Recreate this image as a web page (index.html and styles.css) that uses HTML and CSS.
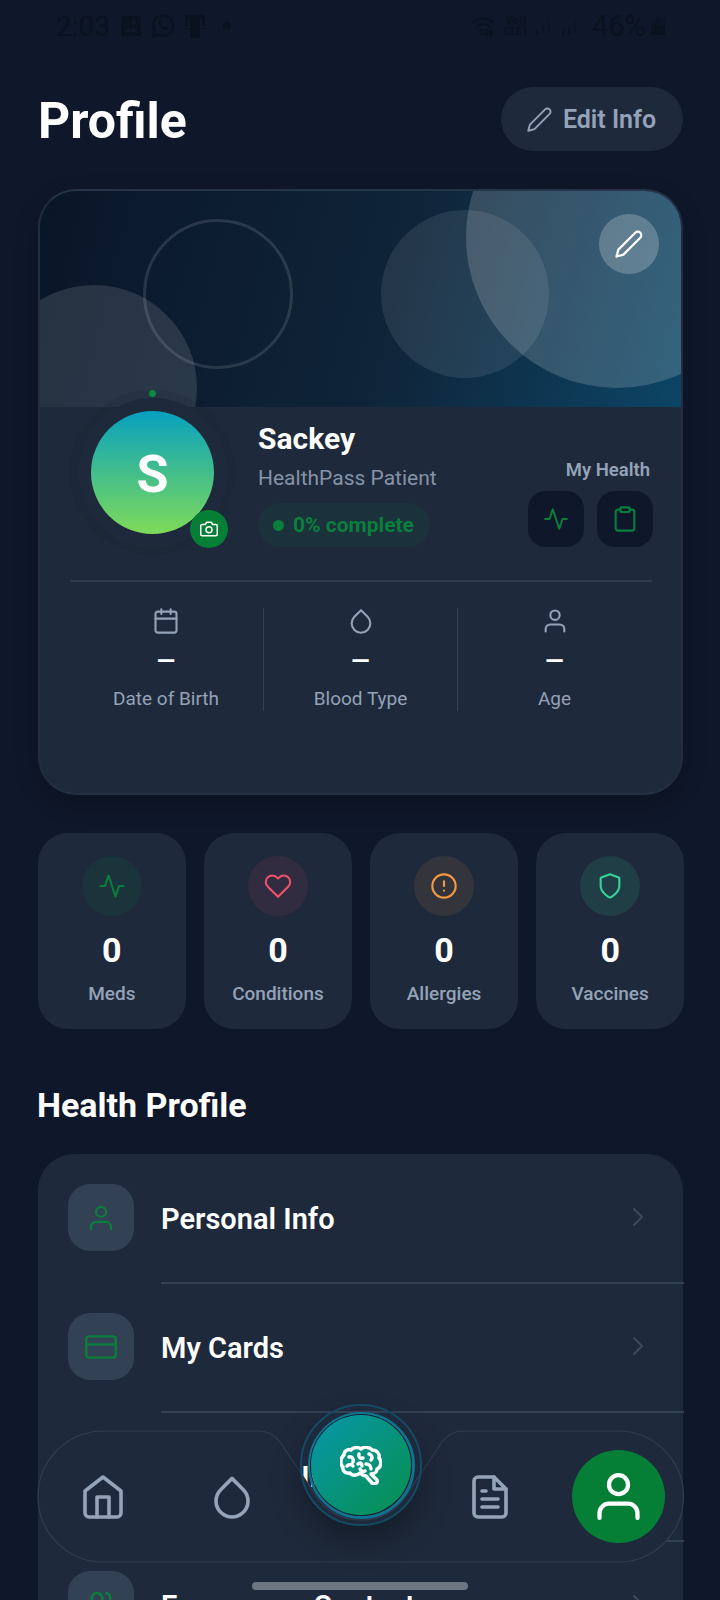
FILE: index.html
```html
<!DOCTYPE html>
<html lang="en">
<head>
<meta charset="utf-8">
<title>Profile</title>
<link rel="stylesheet" href="styles.css">
</head>
<body>
<div class="page">
  <div class="status">
    <div class="status-left">
      <span class="clock">2:03</span>
      <svg class="st-img" viewBox="0 0 20 20"><path d="M3 0h14a3 3 0 0 1 3 3v14a3 3 0 0 1-3 3H3a3 3 0 0 1-3-3V3a3 3 0 0 1 3-3zm10 4a2.300 2.300 0 1 0 0 4.600A2.300 2.300 0 0 0 13 4zM2.500 16.500h15l-4.500-6-3 3.500-2.500-2.500z" fill-rule="evenodd"/></svg>
      <svg class="st-wa" viewBox="0 0 24 24"><path class="st-line" d="M2 22l1.500-5.300A10 10 0 1 1 7.500 20.500z"/><path d="M8.500 6.800c-1.500 1-1.500 3 .3 5.500 2 2.800 4.500 4.200 6.500 3.800 1.300-.3 2-1.400 1.800-2.300l-2.700-1.300-1.200 1.300c-1.300-.5-2.800-2-3.400-3.400l1.100-1.200-1.200-2.800z"/></svg>
      <svg class="st-dev" viewBox="0 0 24 24"><path d="M2 1h20v11h-3V4H5v8H2zM7 4h10v20H7z"/><path d="M0 14h6v1H0zM18 14h6v1h-6z"/></svg>
      <span class="st-dot"></span>
    </div>
    <div class="status-right">
      <svg class="st-wifi" viewBox="0 0 25 21"><path class="st-line" d="M1 7a16 16 0 0 1 22 0M5 11a10.500 10.500 0 0 1 14 0M9 15a5 5 0 0 1 5-1"/><circle cx="11" cy="18" r="1.500"/><path d="M15 12h1.600v5h2l-2.800 4-2.800-4h2zM20 13l2.500 3.500h-1.600V21h-1.800v-4.500h-1.600z"/></svg>
      <div class="st-net"><span>Vo))</span><span>LTE1</span></div>
      <svg class="st-bars" viewBox="0 0 19 20"><path d="M1 14h2v5H1z"/><path class="st-faint" d="M7 9h2v10H7zM13 4h2v15h-2z"/></svg>
      <svg class="st-bars" viewBox="0 0 19 20"><path d="M1 14h2v5H1zM7 11h2v8H7z"/><path class="st-faint" d="M13 4h2v15h-2z"/></svg>
      <span class="st-pct">46%</span>
      <svg class="st-batt" viewBox="0 0 14 18"><path class="st-faint" d="M4 0h6v2h3a1 1 0 0 1 1 1v5H0V3a1 1 0 0 1 1-1h3z"/><path d="M0 8h14v9a1 1 0 0 1-1 1H1a1 1 0 0 1-1-1z"/></svg>
    </div>
  </div>

  <header class="head">
    <h1 class="title">Profile</h1>
    <button class="edit-info">
      <svg class="ic ic-27 slate" viewBox="0 0 24 24"><path d="M17 3a2.828 2.828 0 1 1 4 4L7.500 20.500 2 22l1.500-5.500L17 3z"/></svg>
      <span>Edit Info</span>
    </button>
  </header>

  <section class="card">
    <div class="banner">
      <span class="bub bub-a"></span>
      <span class="bub bub-b"></span>
      <span class="bub bub-c"></span>
      <span class="bub bub-d"></span>
      <button class="banner-edit">
        <svg class="ic ic-30 white" viewBox="0 0 24 24"><path d="M17 3a2.828 2.828 0 1 1 4 4L7.500 20.500 2 22l1.500-5.500L17 3z"/></svg>
      </button>
    </div>
    <div class="who">
      <div class="ring-outer">
        <div class="ring-inner">
          <div class="avatar">S</div>
        </div>
        <span class="ring-dot"></span>
        <span class="cam">
          <svg class="ic ic-18 white" viewBox="0 0 24 24"><path d="M23 19a2 2 0 0 1-2 2H3a2 2 0 0 1-2-2V8a2 2 0 0 1 2-2h4l2-3h6l2 3h4a2 2 0 0 1 2 2z"/><circle cx="12" cy="13" r="4"/></svg>
        </span>
      </div>
      <div class="who-text">
        <div class="name">Sackey</div>
        <div class="role">HealthPass Patient</div>
        <div class="pill"><span class="pill-dot"></span><span>0% complete</span></div>
      </div>
      <div class="my-health">
        <div class="mh-label">My Health</div>
        <div class="mh-btns">
          <span class="mh-btn"><svg class="ic ic-26 green" viewBox="0 0 24 24"><polyline points="22 12 18 12 15 21 9 3 6 12 2 12"/></svg></span>
          <span class="mh-btn"><svg class="ic ic-28 green" viewBox="0 0 24 24"><path d="M16 4h2a2 2 0 0 1 2 2v14a2 2 0 0 1-2 2H6a2 2 0 0 1-2-2V6a2 2 0 0 1 2-2h2"/><rect x="8" y="2" width="8" height="4" rx="1"/></svg></span>
        </div>
      </div>
    </div>
    <div class="card-rule"></div>
    <div class="facts">
      <div class="fact">
        <svg class="ic ic-28 slate" viewBox="0 0 24 24"><rect x="3" y="4" width="18" height="18" rx="2"/><path d="M16 2v4M8 2v4M3 10h18"/></svg>
        <div class="fact-val">—</div>
        <div class="fact-label">Date of Birth</div>
      </div>
      <div class="fact">
        <svg class="ic ic-28 slate" viewBox="0 0 24 24"><path d="M12 2.690l5.660 5.660a8 8 0 1 1-11.310 0z"/></svg>
        <div class="fact-val">—</div>
        <div class="fact-label">Blood Type</div>
      </div>
      <div class="fact">
        <svg class="ic ic-28 slate" viewBox="0 0 24 24"><path d="M20 21v-2a4 4 0 0 0-4-4H8a4 4 0 0 0-4 4v2"/><circle cx="12" cy="7" r="4"/></svg>
        <div class="fact-val">—</div>
        <div class="fact-label">Age</div>
      </div>
    </div>
  </section>

  <section class="tiles">
    <div class="tile">
      <span class="tile-ic tint-green"><svg class="ic ic-28 green" viewBox="0 0 24 24"><polyline points="22 12 18 12 15 21 9 3 6 12 2 12"/></svg></span>
      <div class="tile-val">0</div>
      <div class="tile-label">Meds</div>
    </div>
    <div class="tile">
      <span class="tile-ic tint-red"><svg class="ic ic-28 red" viewBox="0 0 24 24"><path d="M20.840 4.610a5.500 5.500 0 0 0-7.780 0L12 5.670l-1.060-1.060a5.500 5.500 0 0 0-7.780 7.780l1.060 1.060L12 21.230l7.780-7.780 1.060-1.060a5.500 5.500 0 0 0 0-7.780z"/></svg></span>
      <div class="tile-val">0</div>
      <div class="tile-label">Conditions</div>
    </div>
    <div class="tile">
      <span class="tile-ic tint-orange"><svg class="ic ic-28 orange" viewBox="0 0 24 24"><circle cx="12" cy="12" r="10"/><path d="M12 8v4M12 16h.01"/></svg></span>
      <div class="tile-val">0</div>
      <div class="tile-label">Allergies</div>
    </div>
    <div class="tile">
      <span class="tile-ic tint-mint"><svg class="ic ic-28 mint" viewBox="0 0 24 24"><path d="M12 22s8-4 8-10V5l-8-3-8 3v7c0 6 8 10 8 10z"/></svg></span>
      <div class="tile-val">0</div>
      <div class="tile-label">Vaccines</div>
    </div>
  </section>

  <h2 class="section-title">Health Profile</h2>

  <section class="list">
    <div class="row">
      <span class="row-ic"><svg class="ic ic-30 green" viewBox="0 0 24 24"><path d="M20 21v-2a4 4 0 0 0-4-4H8a4 4 0 0 0-4 4v2"/><circle cx="12" cy="7" r="4"/></svg></span>
      <div class="row-body"><span>Personal Info</span><svg class="chev" viewBox="0 0 12 20"><path d="M2 2l8 8-8 8"/></svg></div>
    </div>
    <div class="row">
      <span class="row-ic"><svg class="ic ic-32 green" viewBox="0 0 24 24"><rect x="1" y="4" width="22" height="16" rx="2"/><path d="M1 10h22"/></svg></span>
      <div class="row-body"><span>My Cards</span><svg class="chev" viewBox="0 0 12 20"><path d="M2 2l8 8-8 8"/></svg></div>
    </div>
    <div class="row">
      <span class="row-ic"><svg class="ic ic-32 green" viewBox="0 0 24 24"><path d="M12 22s8-4 8-10V5l-8-3-8 3v7c0 6 8 10 8 10z"/></svg></span>
      <div class="row-body"><span class="row-wide">Insurance Info</span><svg class="chev" viewBox="0 0 12 20"><path d="M2 2l8 8-8 8"/></svg></div>
    </div>
    <div class="row">
      <span class="row-ic"><svg class="ic ic-32 green" viewBox="0 0 24 24"><path d="M17 21v-2a4 4 0 0 0-4-4H5a4 4 0 0 0-4 4v2"/><circle cx="9" cy="7" r="4"/><path d="M23 21v-2a4 4 0 0 0-3-3.870M16 3.130a4 4 0 0 1 0 7.750"/></svg></span>
      <div class="row-body"><span>Emergency Contact</span><svg class="chev" viewBox="0 0 12 20"><path d="M2 2l8 8-8 8"/></svg></div>
    </div>
  </section>

  <nav class="nav">
    <svg class="nav-bg" viewBox="37 1430 647 134"><path d="M103.500 1431H258C270 1431 278 1437 284 1448L317 1497C326 1512 344 1520 361 1520S396 1512 405 1497L438 1448C444 1437 452 1431 464 1431H618A65.500 65.500 0 0 1 618 1562H103.500A65.500 65.500 0 0 1 103.500 1431Z"/></svg>
    <span class="nav-item"><svg class="ic ic-48 slate" viewBox="0 0 24 24"><path d="M3 9l9-7 9 7v11a2 2 0 0 1-2 2H5a2 2 0 0 1-2-2z"/><path d="M9 22V12h6v10"/></svg></span>
    <span class="nav-item"><svg class="ic ic-48 slate" viewBox="0 0 24 24"><path d="M12 2.690l5.660 5.660a8 8 0 1 1-11.310 0z"/></svg></span>
    <span class="nav-item"></span>
    <span class="nav-item"><svg class="ic ic-48 slate" viewBox="0 0 24 24"><path d="M14 2H6a2 2 0 0 0-2 2v16a2 2 0 0 0 2 2h12a2 2 0 0 0 2-2V8z"/><path d="M14 2v6h6M16 13H8M16 17H8M10 9H8"/></svg></span>
    <span class="nav-item"><span class="nav-active"><svg class="ic ic-57 white" viewBox="0 0 24 24"><path d="M20 21v-2a4 4 0 0 0-4-4H8a4 4 0 0 0-4 4v2"/><circle cx="12" cy="7" r="4"/></svg></span></span>
    <div class="fab-ring">
      <div class="fab-ring2">
        <div class="fab">
          <svg class="brain" viewBox="0 0 42 39"><path d="M4 9C4 4 9 3 11 4C13 1 19 1 21 3C24 0 30 1 32 4C37 4 40 8 39 12C42 15 41 22 37 23C37 26 34 28 31 28L37 34C38 37 35 39 32 37L26 30C24 30 22 29 20 27C17 30 12 30 10 27C6 28 2 25 3 21C0 19 0 12 4 9Z"/><path d="M9 11C12 10 14 13 13 16M7 20C9 18 12 18 13 20M19 8C18 11 20 13 23 12M29 8C32 9 33 12 31 14M18 18C20 16 22 17 22 20M26 18C29 18 31 20 31 23M20 23C21 25 23 26 25 25"/></svg>
        </div>
      </div>
    </div>
  </nav>
  <div class="home-bar"></div>
</div>
</body>
</html>
```

FILE: styles.css
```css
* { box-sizing: border-box; }
html, body { margin: 0; padding: 0; background: #0f172a; }
body { font-family: Roboto, "Liberation Sans", sans-serif; color: #fff; }
button { font-family: inherit; border: 0; cursor: pointer; }

.page { position: relative; width: 720px; height: 1600px; overflow: hidden; background: #0f172a; padding: 0 37px 0 38px; }

/* icons */
.ic { display: block; flex: none; fill: none; stroke: currentColor; stroke-width: 1.8; stroke-linecap: round; stroke-linejoin: round; }
.ic-18 { width: 18px; height: 18px; stroke-width: 2; }
.ic-26 { width: 26px; height: 26px; }
.ic-27 { width: 27px; height: 27px; stroke-width: 1.7; }
.ic-28 { width: 28px; height: 28px; }
.ic-30 { width: 30px; height: 30px; }
.ic-32 { width: 32px; height: 32px; }
.ic-48 { width: 48px; height: 48px; }
.ic-57 { width: 57px; height: 57px; }
.slate { color: #94a3b8; }
.white { color: #fff; }
.green { color: #0a7f3c; }
.red { color: #f0506a; }
.orange { color: #f59a42; }
.mint { color: #34d399; }

/* status bar */
.status { height: 52px; margin: 0 -37px 0 -38px; padding: 0 55px 0 56px; display: flex; justify-content: space-between; align-items: center; color: #0a111f; fill: #0a111f; }
.status-left, .status-right { display: flex; align-items: center; }
.clock { font-size: 28px; width: 65px; }
.st-img { width: 20px; height: 20px; margin-right: 10px; }
.st-wa { width: 24px; height: 24px; margin-right: 8px; }
.st-dev { width: 24px; height: 24px; }
.st-dot { width: 8px; height: 8px; border-radius: 50%; background: #0a111f; margin-left: 16px; }
.st-line { fill: none; stroke: #0a111f; stroke-width: 2; }
.st-wifi { width: 25px; height: 21px; margin-right: 8px; }
.st-net { display: flex; flex-direction: column; align-items: center; font-size: 11px; font-weight: 700; line-height: 11px; width: 24px; margin-right: 7px; }
.st-bars { width: 19px; height: 20px; margin-right: 7px; }
.st-faint { opacity: .45; }
.st-pct { font-size: 29px; width: 59px; margin-left: 5px; }
.st-batt { width: 14px; height: 18px; }

/* header */
.head { display: flex; justify-content: space-between; align-items: center; margin-top: 35px; height: 64px; }
.title { margin: 0; padding-top: 3px; font-size: 50px; font-weight: 700; line-height: 64px; }
.edit-info { height: 64px; width: 182px; border-radius: 32px; background: #1e293b; color: #94a3b8; font-size: 25px; font-weight: 600; display: flex; align-items: center; justify-content: center; gap: 10px; padding: 1px 2px 0 0; }

/* profile card */
.card { margin-top: 38px; height: 606px; background: #1e293b; border: 2px solid #273347; border-bottom-color: #253044; border-left-color: #222d40; border-right-color: #222d40; border-radius: 38px; overflow: hidden; box-shadow: 0 8px 24px rgba(0, 0, 0, .2); }
.banner { position: relative; height: 216px; overflow: hidden; background: linear-gradient(105deg, #0a1628 0%, #0f2439 55%, #0c4565 100%); }
.bub { position: absolute; border-radius: 50%; }
.bub-a { left: 426px; top: -105px; width: 302px; height: 302px; background: rgba(255, 255, 255, .17); }
.bub-b { left: 341px; top: 19px; width: 168px; height: 168px; background: rgba(255, 255, 255, .09); }
.bub-c { left: 103px; top: 28px; width: 150px; height: 150px; border: 3px solid rgba(255, 255, 255, .12); }
.bub-d { left: -49px; top: 94px; width: 206px; height: 206px; background: rgba(255, 255, 255, .12); }
.banner-edit { position: absolute; left: 559px; top: 23px; width: 60px; height: 60px; border-radius: 50%; background: rgba(255, 255, 255, .22); display: flex; align-items: center; justify-content: center; padding: 0; }

.who { position: relative; display: flex; margin-top: -17px; padding: 0 28px 0 30px; height: 165px; }
.ring-outer { position: relative; flex: none; width: 165px; height: 165px; border-radius: 50%; background: rgba(15, 23, 42, .12); display: flex; align-items: center; justify-content: center; }
.ring-inner { width: 150px; height: 150px; border-radius: 50%; background: #1e293b; display: flex; align-items: center; justify-content: center; }
.avatar { width: 123px; height: 123px; border-radius: 50%; padding-top: 3px; background: linear-gradient(180deg, #07a0bf, #7edb58); display: flex; align-items: center; justify-content: center; font-size: 52px; font-weight: 700; }
.ring-dot { position: absolute; left: 79px; top: 0; width: 7px; height: 7px; border-radius: 50%; background: #0a8a3e; }
.cam { position: absolute; left: 120px; top: 120px; width: 38px; height: 38px; border-radius: 50%; background: #057f36; display: flex; align-items: center; justify-content: center; }

.who-text { margin-left: 23px; padding-top: 31px; }
.name { font-size: 30px; font-weight: 700; line-height: 36px; }
.role { font-size: 21px; line-height: 26px; margin-top: 8px; color: #8493a8; }
.pill { margin-top: 12px; height: 44px; width: 172px; border-radius: 22px; background: rgba(10, 127, 60, .1); display: flex; align-items: center; gap: 9px; padding-left: 15px; color: #0a7f3c; font-size: 21px; font-weight: 700; }
.pill-dot { width: 11px; height: 11px; border-radius: 50%; background: #0a7f3c; }

.my-health { margin-left: auto; padding-top: 69px; display: flex; flex-direction: column; align-items: flex-end; }
.mh-label { font-size: 18.5px; font-weight: 600; line-height: 22px; color: #94a3b8; padding-right: 3px; }
.mh-btns { display: flex; gap: 13px; margin-top: 10px; }
.mh-btn { width: 56px; height: 56px; border-radius: 18px; background: #0f172a; display: flex; align-items: center; justify-content: center; }

.card-rule { height: 2px; background: #2d394c; margin: 25px 29px 0 30px; }
.facts { display: grid; grid-template-columns: repeat(3, 1fr); margin: 26px 30px 0 29px; }
.fact { height: 103px; display: flex; flex-direction: column; align-items: center; border-left: 1px solid #334155; }
.fact:first-child { border-left: 0; }
.fact .ic { margin-top: -1px; }
.fact-val { margin-top: 11px; font-size: 24px; font-weight: 700; line-height: 30px; }
.fact-label { margin-top: 11px; font-size: 19px; line-height: 24px; color: #94a3b8; }

/* tiles */
.tiles { margin: 38px -1px 0 0; display: grid; grid-template-columns: repeat(4, 1fr); gap: 18.5px; }
.tile { height: 196px; border-radius: 30px; background: #1e293b; padding-top: 23px; display: flex; flex-direction: column; align-items: center; }
.tile-ic { width: 60px; height: 60px; border-radius: 50%; display: flex; align-items: center; justify-content: center; }
.tint-green { background: rgba(10, 127, 60, .12); }
.tint-red { background: rgba(240, 80, 106, .1); }
.tint-orange { background: rgba(245, 154, 66, .1); }
.tint-mint { background: rgba(52, 211, 153, .12); }
.tile-val { margin-top: 14px; font-size: 34px; font-weight: 700; line-height: 40px; }
.tile-label { margin-top: 12px; font-size: 19px; font-weight: 500; line-height: 24px; color: #94a3b8; }

.section-title { margin: 56px 0 0 -1px; font-size: 34px; font-weight: 700; line-height: 40px; }

/* list */
.list { margin-top: 29px; background: #1e293b; border-radius: 36px; padding-top: 1px; }
.row { display: flex; align-items: center; height: 129px; padding-left: 30px; }
.row-ic { flex: none; width: 66px; height: 67px; margin-bottom: 4px; border-radius: 22px; background: #334155; display: flex; align-items: center; justify-content: center; }
.row-body { flex: 1; align-self: stretch; margin-left: 27px; margin-right: -1px; border-bottom: 2px solid #334155; display: flex; align-items: center; justify-content: space-between; padding-right: 40px; font-size: 29px; font-weight: 600; }
.row-wide { word-spacing: 5px; }
.chev { width: 12px; height: 20px; margin-bottom: 4px; fill: none; stroke: #3d4a5e; stroke-width: 2; stroke-linecap: round; stroke-linejoin: round; }

/* bottom nav */
.nav { position: absolute; left: 38px; top: 1431px; width: 645px; height: 131px; display: grid; grid-template-columns: repeat(5, 1fr); }
.nav-bg { position: absolute; left: -1px; top: -1px; width: 647px; height: 134px; fill: #1e293b; stroke: #313d50; stroke-width: 1.2; }
.nav-item { position: relative; display: flex; align-items: center; justify-content: center; }
.nav-active { width: 93px; height: 93px; border-radius: 50%; background: #057f36; display: flex; align-items: center; justify-content: center; }
.fab-ring { position: absolute; left: 262px; top: -27px; width: 122px; height: 122px; border-radius: 50%; border: 2px solid #154a63; display: flex; align-items: center; justify-content: center; box-shadow: 0 16px 30px rgba(0, 0, 0, .28); }
.fab-ring2 { width: 107px; height: 107px; border-radius: 50%; border: 3px solid #0e7490; display: flex; align-items: center; justify-content: center; }
.fab { width: 100px; height: 100px; border-radius: 50%; background: linear-gradient(135deg, #0797aa, #078f4e); box-shadow: 0 0 0 1px #10202f; display: flex; align-items: center; justify-content: center; }
.brain { width: 42px; height: 39px; fill: none; stroke: #fff; stroke-width: 3.5; stroke-linecap: round; stroke-linejoin: round; }
.home-bar { position: absolute; left: 252px; top: 1582px; width: 216px; height: 8px; border-radius: 4px; background: #6f7683; }
```
